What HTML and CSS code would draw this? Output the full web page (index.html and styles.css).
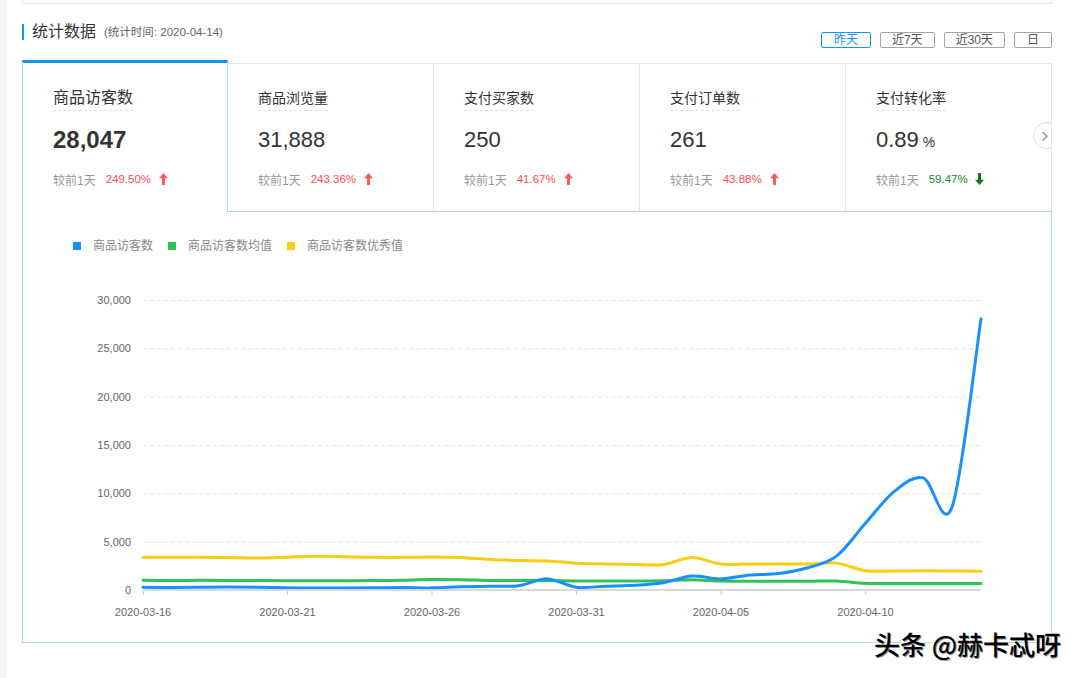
FILE: index.html
```html
<!DOCTYPE html>
<html lang="zh-CN">
<head>
<meta charset="utf-8">
<title>统计数据</title>
<link rel="stylesheet" href="styles.css">
</head>
<body>
<div class="page">
  <div class="prev-box"></div>
  <div class="header">
    <div class="title"><span class="title-text">统计数据</span><span class="title-sub">(统计时间: 2020-04-14)</span></div>
    <div class="ranges">
      <button class="range active">昨天</button>
      <button class="range num">近7天</button>
      <button class="range num">近30天</button>
      <button class="range">日</button>
    </div>
  </div>
  <div class="cards">
    <div class="card active">
      <div class="card-title"><span>商品访客数</span></div>
      <div class="card-value">28,047</div>
      <div class="card-cmp"><span>较前1天</span><span class="pct up">249.50%</span><svg class="arrow up" width="9" height="12" viewBox="0 0 9 12"><path d="M4.5 0 L9 5.2 L6 5.2 L6 12 L3 12 L3 5.2 L0 5.2 Z"/></svg></div>
    </div>
    <div class="card">
      <div class="card-title"><span>商品浏览量</span></div>
      <div class="card-value">31,888</div>
      <div class="card-cmp"><span>较前1天</span><span class="pct up">243.36%</span><svg class="arrow up" width="9" height="12" viewBox="0 0 9 12"><path d="M4.5 0 L9 5.2 L6 5.2 L6 12 L3 12 L3 5.2 L0 5.2 Z"/></svg></div>
    </div>
    <div class="card">
      <div class="card-title"><span>支付买家数</span></div>
      <div class="card-value">250</div>
      <div class="card-cmp"><span>较前1天</span><span class="pct up">41.67%</span><svg class="arrow up" width="9" height="12" viewBox="0 0 9 12"><path d="M4.5 0 L9 5.2 L6 5.2 L6 12 L3 12 L3 5.2 L0 5.2 Z"/></svg></div>
    </div>
    <div class="card">
      <div class="card-title"><span>支付订单数</span></div>
      <div class="card-value">261</div>
      <div class="card-cmp"><span>较前1天</span><span class="pct up">43.88%</span><svg class="arrow up" width="9" height="12" viewBox="0 0 9 12"><path d="M4.5 0 L9 5.2 L6 5.2 L6 12 L3 12 L3 5.2 L0 5.2 Z"/></svg></div>
    </div>
    <div class="card last">
      <div class="card-title"><span>支付转化率</span></div>
      <div class="card-value">0.89<span class="unit">%</span></div>
      <div class="card-cmp"><span>较前1天</span><span class="pct down">59.47%</span><svg class="arrow down" width="9" height="12" viewBox="0 0 9 12"><path d="M4.5 12 L9 6.8 L6 6.8 L6 0 L3 0 L3 6.8 L0 6.8 Z"/></svg></div>
      <div class="next-btn"><svg width="25" height="25" viewBox="0 0 25 25"><path d="M8.5 9 L13 13.2 L8.5 17.4"/></svg></div>
    </div>
  </div>
  <div class="panel">
    <div class="legend">
      <span class="legend-item"><i class="swatch blue"></i>商品访客数</span>
      <span class="legend-item"><i class="swatch green"></i>商品访客数均值</span>
      <span class="legend-item"><i class="swatch yellow"></i>商品访客数优秀值</span>
    </div>
    <svg class="chart" id="chart" width="1028" height="389" viewBox="0 0 1028 389">
      <g class="grid">
        <line x1="120" x2="958" y1="47.5" y2="47.5"/>
        <line x1="120" x2="958" y1="95.8" y2="95.8"/>
        <line x1="120" x2="958" y1="144.2" y2="144.2"/>
        <line x1="120" x2="958" y1="192.5" y2="192.5"/>
        <line x1="120" x2="958" y1="240.8" y2="240.8"/>
        <line x1="120" x2="958" y1="289.2" y2="289.2"/>
      </g>
      <g class="ticks">
        <line x1="120.5" x2="120.5" y1="337" y2="342"/>
        <line x1="264.5" x2="264.5" y1="337" y2="342"/>
        <line x1="409" x2="409" y1="337" y2="342"/>
        <line x1="553.5" x2="553.5" y1="337" y2="342"/>
        <line x1="698" x2="698" y1="337" y2="342"/>
        <line x1="842.5" x2="842.5" y1="337" y2="342"/>
      </g>
      <g class="ylabels">
        <text x="108" y="51">30,000</text>
        <text x="108" y="99.3">25,000</text>
        <text x="108" y="147.7">20,000</text>
        <text x="108" y="196">15,000</text>
        <text x="108" y="244.3">10,000</text>
        <text x="108" y="292.7">5,000</text>
        <text x="108" y="341">0</text>
      </g>
      <g class="xlabels">
        <text x="120" y="363">2020-03-16</text>
        <text x="264.5" y="363">2020-03-21</text>
        <text x="409" y="363">2020-03-26</text>
        <text x="553.5" y="363">2020-03-31</text>
        <text x="698" y="363">2020-04-05</text>
        <text x="842.5" y="363">2020-04-10</text>
      </g>
      <g id="lines"></g>
      <line class="axis" x1="120" x2="958" y1="337" y2="337"/>
    </svg>
  </div>
</div>
<div class="watermark">头条 @赫卡忒呀</div>
<script src="script.js"></script>
</body>
</html>
```

FILE: styles.css
```css
* { box-sizing: border-box; }
html, body { margin: 0; padding: 0; }
body {
  background: #f5f5f9;
  font-family: "Liberation Sans", "Noto Sans CJK SC", sans-serif;
  color: #333;
  position: relative;
  overflow: hidden;
}
.page {
  margin-left: 7px;
  background: #fff;
  padding: 0 38px 0 15px;
  height: 678px;
}
.prev-box {
  height: 4px;
  border: 1px solid #e6e6e6;
  border-top: none;
}
.header {
  margin-top: 20px;
  display: flex;
  justify-content: space-between;
  align-items: flex-start;
}
.title {
  display: flex;
  align-items: center;
  height: 16px;
  border-left: 2px solid #1890ff;
  padding-left: 8px;
}
.title-text { font-size: 16px; line-height: 16px; color: #333; }
.title-sub { font-size: 11.5px; color: #666; margin-left: 8px; line-height: 16px; }
.ranges { display: flex; gap: 9px; margin-top: 8px; }
.range {
  height: 16px;
  padding: 0 12px;
  border: 1px solid #a6a6a6;
  border-radius: 2px;
  background: #fff;
  color: #555;
  font: 12px/14px "Liberation Sans", "Noto Sans CJK SC", sans-serif;
}
.range.num { padding: 0 11px; }
.range.active { border-color: #1890ff; color: #1890ff; }

.cards {
  margin-top: 12px;
  display: grid;
  grid-template-columns: repeat(5, 1fr);
  height: 152px;
}
.card {
  margin-top: 3px;
  border-top: 1px solid #e6e6e6;
  border-right: 1px solid #e6e6e6;
  border-bottom: 1px solid #abd6f5;
  padding: 24px 0 0 30px;
  background: #fff;
}
.card.active {
  margin-top: 0;
  border-top: 3px solid #1296db;
  border-left: 1px solid #abd6f5;
  border-right: 1px solid #abd6f5;
  border-bottom: none;
  padding: 25px 0 0 30px;
}
.card.last { position: relative; overflow: hidden; }
.card-title span {
  display: inline-block;
  font-size: 14px;
  line-height: 20px;
  padding-bottom: 2px;
  border-bottom: 1px dashed #dddddd;
  color: #333;
}
.card.active .card-title span { font-size: 16px; }
.card-value {
  margin-top: 14px;
  height: 30px;
  line-height: 30px;
  font-size: 22px;
  color: #333;
}
.card.active .card-value { font-size: 24px; font-weight: bold; }
.card-value .unit { font-size: 14px; margin-left: 4px; }
.card-cmp {
  margin-top: 16px;
  display: flex;
  align-items: center;
  height: 16px;
  font-size: 12px;
  color: #999;
}
.pct { margin-left: 10px; font-size: 11.5px; }
.pct.up { color: #ff4d4f; }
.pct.down { color: #1a8a1a; }
.arrow { margin-left: 8px; display: block; }
.arrow.up path { fill: #ff5a5a; }
.arrow.down { margin-left: 7px; }
.arrow.down path { fill: #137a13; }
.next-btn {
  position: absolute;
  left: 187px;
  top: 58px;
  width: 27px;
  height: 27px;
  border: 1px solid #dddddd;
  border-radius: 50%;
  background: #fff;
}
.next-btn svg { display: block; }
.next-btn path { fill: none; stroke: #9a9a9a; stroke-width: 1.5; }

.panel {
  height: 431px;
  border: 1px solid #abd6f5;
  border-top: none;
}
.legend {
  padding: 26px 0 0 50px;
  height: 41px;
  display: flex;
  align-items: center;
  font-size: 12px;
  line-height: 16px;
  color: #888;
}
.legend-item { display: inline-flex; align-items: center; margin-right: 15px; height: 16px; }
.swatch { display: inline-block; width: 8px; height: 8px; margin-right: 12px; }
.swatch.blue { background: #1890ff; }
.swatch.green { background: #2fc25b; }
.swatch.yellow { background: #facc14; }

.chart { display: block; }
.grid line { stroke: #e6e6e6; stroke-width: 1; stroke-dasharray: 4 3; }
.ticks line { stroke: #cccccc; stroke-width: 1; }
.axis { stroke: #d9d9d9; stroke-width: 2; }
.ylabels text {
  font-family: "Liberation Sans", sans-serif;
  font-size: 11px;
  fill: #666;
  text-anchor: end;
}
.xlabels text {
  font-family: "Liberation Sans", sans-serif;
  font-size: 11px;
  fill: #666;
  text-anchor: middle;
}
.series { fill: none; stroke-width: 3; stroke-linejoin: round; stroke-linecap: round; }

.watermark {
  position: absolute;
  left: 874px;
  top: 629px;
  font-family: "Noto Sans CJK SC", sans-serif;
  font-size: 26px;
  font-weight: 500;
  line-height: 30px;
  color: #000;
  white-space: nowrap;
  text-shadow: 1px 1px 0 rgba(0, 0, 0, 0.45), -1px -1px 0 #fff;
}
```

FILE: script.js
```js
(function () {
  var X0 = 120, STEP = 838 / 29, Y0 = 337, SCALE = 290 / 30000;
  var series = [
    { color: '#facc14', data: [3380, 3380, 3390, 3370, 3320, 3400, 3500, 3450, 3380, 3380, 3420, 3350, 3150, 3050, 3000, 2780, 2700, 2650, 2620, 3350, 2680, 2700, 2700, 2680, 2780, 2000, 1960, 1980, 1960, 1950] },
    { color: '#2fc25b', data: [1000, 990, 1000, 980, 970, 960, 960, 960, 970, 1020, 1080, 1060, 990, 990, 980, 940, 930, 940, 950, 1060, 920, 900, 900, 900, 930, 690, 680, 680, 670, 660] },
    { color: '#1890ff', data: [280, 260, 280, 300, 280, 220, 200, 200, 220, 260, 220, 330, 380, 450, 1150, 280, 400, 480, 750, 1450, 1150, 1550, 1700, 2300, 3500, 6900, 10200, 11600, 8600, 28047] }
  ];
  var NS = 'http://www.w3.org/2000/svg';
  var g = document.getElementById('lines');
  if (!g) return;
  series.forEach(function (s) {
    var pts = s.data.map(function (v, i) { return [X0 + i * STEP, Y0 - v * SCALE]; });
    var d = 'M' + pts[0][0].toFixed(2) + ',' + pts[0][1].toFixed(2);
    for (var i = 0; i < pts.length - 1; i++) {
      var p0 = pts[i - 1] || pts[i], p1 = pts[i], p2 = pts[i + 1], p3 = pts[i + 2] || p2;
      var c1x = p1[0] + (p2[0] - p0[0]) / 6, c1y = p1[1] + (p2[1] - p0[1]) / 6;
      var c2x = p2[0] - (p3[0] - p1[0]) / 6, c2y = p2[1] - (p3[1] - p1[1]) / 6;
      d += ' C' + c1x.toFixed(2) + ',' + c1y.toFixed(2) + ' ' + c2x.toFixed(2) + ',' + c2y.toFixed(2) + ' ' + p2[0].toFixed(2) + ',' + p2[1].toFixed(2);
    }
    var path = document.createElementNS(NS, 'path');
    path.setAttribute('d', d);
    path.setAttribute('class', 'series');
    path.setAttribute('stroke', s.color);
    g.appendChild(path);
  });
})();
```
